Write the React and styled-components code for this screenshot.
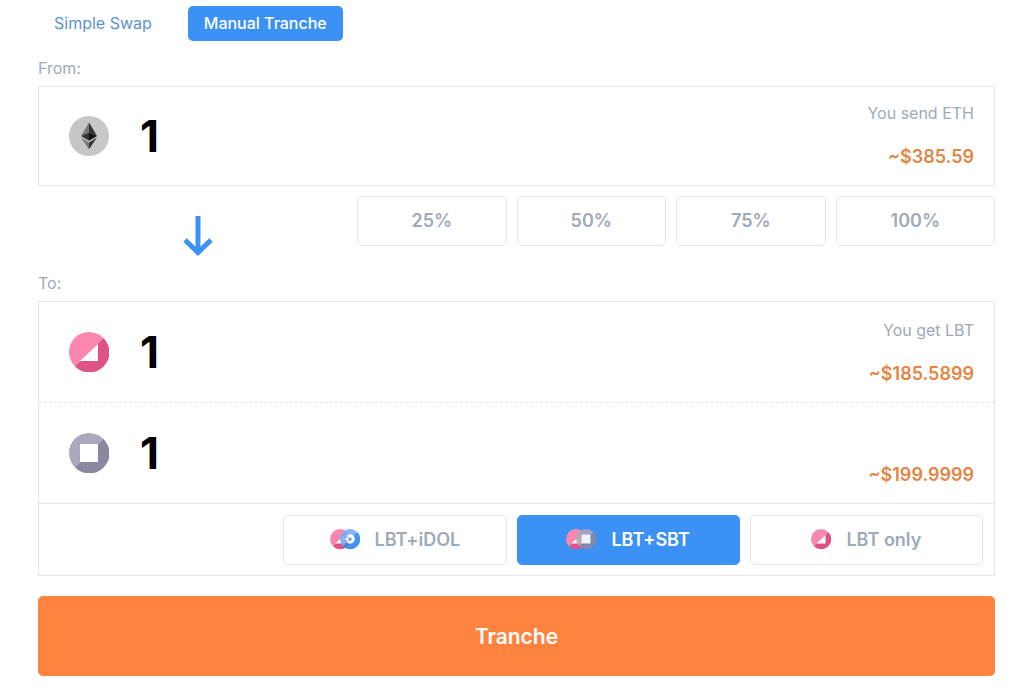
import { useState } from "react";
import styled, { createGlobalStyle } from "styled-components";

const percents = ["25%", "50%", "75%", "100%"];

const pairs = [
  { id: "idol", label: "LBT+iDOL", icons: ["lbt", "idol"] },
  { id: "sbt", label: "LBT+SBT", icons: ["lbt", "sbt"] },
  { id: "lbt", label: "LBT only", icons: ["lbt"] },
];

function EthIcon() {
  return (
    <TokenSvg viewBox="0 0 40 40" aria-hidden="true">
      <circle cx="20" cy="20" r="20" fill="#c6c6c6" />
      <path d="M20 6.5 12 20l8-3.6z" fill="#777" />
      <path d="M20 6.5 28 20l-8-3.6z" fill="#333" />
      <path d="M12 20l8-3.6v8.4z" fill="#333" />
      <path d="M28 20l-8-3.6v8.4z" fill="#111" />
      <path d="M12 21.6l8 4.8v6.8z" fill="#777" />
      <path d="M28 21.6l-8 4.8v6.8z" fill="#333" />
    </TokenSvg>
  );
}

function TokenIcon({ type, small }) {
  return (
    <TokenSvg viewBox="0 0 40 40" $small={small} $type={type} aria-hidden="true">
      {type === "lbt" && (
        <>
          <circle cx="20" cy="20" r="20" fill="#fb87ae" />
          <path d="M34.6 6.3A20 20 0 0 1 6.3 34.6z" fill="#df5286" />
          <path d="M29 12v17H11z" fill="#fff" />
        </>
      )}
      {type === "sbt" && (
        <>
          <circle cx="20" cy="20" r="20" fill="#a9a8bf" />
          <path d="M34.6 6.3A20 20 0 0 1 6.3 34.6z" fill="#8988a0" />
          <path d="M11 11h18v18H11z" fill="#fff" />
        </>
      )}
      {type === "idol" && (
        <>
          <circle cx="20" cy="20" r="20" fill="#77aef5" />
          <path d="M34.6 6.3A20 20 0 0 1 6.3 34.6z" fill="#3289ed" />
          <circle cx="20" cy="20" r="6.5" fill="none" stroke="#fff" strokeWidth="6" />
          <path d="M9 16h6M9 24h6" stroke="#77aef5" strokeWidth="3" />
        </>
      )}
    </TokenSvg>
  );
}

function App() {
  const [tab, setTab] = useState("manual");
  const [pair, setPair] = useState("sbt");
  const [amount, setAmount] = useState("1");

  return (
    <Page>
      <GlobalStyle />
      <Tabs>
        <Tab $active={tab === "simple"} onClick={() => setTab("simple")}>
          Simple Swap
        </Tab>
        <Tab $active={tab === "manual"} onClick={() => setTab("manual")}>
          Manual Tranche
        </Tab>
      </Tabs>

      <Label htmlFor="from">From:</Label>
      <Panel>
        <TokenRow>
          <EthIcon />
          <Amount
            id="from"
            value={amount}
            onChange={(e) => setAmount(e.target.value)}
          />
          <Info>
            <Caption>You send ETH</Caption>
            <Price>~$385.59</Price>
          </Info>
        </TokenRow>
      </Panel>

      <PercentRow>
        <ArrowCell>
          <ArrowSvg viewBox="0 0 30 40" aria-hidden="true">
            <path d="M15 0v36M2 24l13 12.5L28 24" />
          </ArrowSvg>
        </ArrowCell>
        {percents.map((percent) => (
          <OptionButton key={percent}>{percent}</OptionButton>
        ))}
      </PercentRow>

      <Label htmlFor="to">To:</Label>
      <Panel>
        <TokenRow $divider="dashed">
          <TokenIcon type="lbt" />
          <Amount id="to" value={amount} readOnly />
          <Info>
            <Caption>You get LBT</Caption>
            <Price>~$185.5899</Price>
          </Info>
        </TokenRow>
        <TokenRow $divider="solid">
          <TokenIcon type="sbt" />
          <Amount aria-label="SBT amount" value={amount} readOnly />
          <Info>
            <Price>~$199.9999</Price>
          </Info>
        </TokenRow>
        <PairRow>
          {pairs.map(({ id, label, icons }) => (
            <OptionButton
              key={id}
              $active={pair === id}
              onClick={() => setPair(id)}
            >
              <IconGroup>
                {icons.map((type) => (
                  <TokenIcon key={type} type={type} small />
                ))}
              </IconGroup>
              {label}
            </OptionButton>
          ))}
        </PairRow>
      </Panel>

      <Submit>Tranche</Submit>
    </Page>
  );
}

const GlobalStyle = createGlobalStyle`
  * {
    box-sizing: border-box;
  }
  body {
    margin: 0;
    background-color: #fff;
  }
  body, button, input {
    font-family: Inter, Roboto, sans-serif;
  }
  button {
    cursor: pointer;
  }
`;

const Page = styled.main`
  display: flex;
  flex-direction: column;
  padding: 6px 34px 19px 38px;
`;

const Tabs = styled.div`
  display: flex;
  column-gap: 20px;
  margin-bottom: 15px;
`;

const Tab = styled.button`
  height: 35px;
  padding: 0 16px 2px;
  border: none;
  border-radius: 5px;
  font-size: 16px;
  font-weight: ${({ $active }) => ($active ? 500 : 400)};
  color: ${({ $active }) => ($active ? "#fff" : "#5b93d3")};
  background-color: ${({ $active }) => ($active ? "#3c91f5" : "transparent")};
`;

const Label = styled.label`
  height: 30px;
  font-size: 16px;
  line-height: 24px;
  color: #9daab8;
`;

const Panel = styled.section`
  border: 1px solid #e4e6e8;
`;

const TokenRow = styled.div`
  display: flex;
  align-items: center;
  min-height: 98px;
  padding: 0 20px 0 30px;
  ${({ $divider }) =>
    $divider && `min-height: 101px; border-bottom: 1px ${$divider} #e4e6e8;`}
`;

const TokenSvg = styled.svg`
  flex: none;
  width: ${({ $small }) => ($small ? "20px" : "40px")};
  height: ${({ $small }) => ($small ? "20px" : "40px")};
  opacity: ${({ $small, $type }) => ($small && $type !== "lbt" ? 0.9 : 1)};
`;

const Amount = styled.input`
  flex: 1;
  min-width: 0;
  margin-left: 31px;
  padding: 0;
  border: none;
  outline: none;
  background: transparent;
  font-size: 44px;
  font-weight: 700;
  color: #000;
`;

const Info = styled.div`
  display: flex;
  flex-direction: column;
  align-self: stretch;
  justify-content: flex-end;
  row-gap: 20px;
  padding-bottom: 16px;
  text-align: right;
`;

const Caption = styled.span`
  font-size: 16px;
  line-height: 24px;
  color: #9daab8;
`;

const Price = styled.span`
  font-size: 18px;
  font-weight: 600;
  line-height: 24px;
  color: #e38544;
`;

const PercentRow = styled.div`
  display: grid;
  grid-template-columns: 2fr repeat(4, 1fr);
  margin: 10px 0 15px;
`;

const ArrowCell = styled.div`
  display: flex;
  justify-content: center;
  padding: 20px 0 0;
`;

const ArrowSvg = styled.svg`
  flex: none;
  width: 30px;
  height: 40px;
  fill: none;
  stroke: #3c91f5;
  stroke-width: 5px;
`;

const OptionButton = styled.button`
  display: flex;
  align-items: center;
  justify-content: center;
  column-gap: 15px;
  height: 50px;
  margin-right: 10px;
  padding: 0 0 2px;
  border: 1px solid ${({ $active }) => ($active ? "#3c91f5" : "#e4e6e8")};
  border-radius: 5px;
  font-size: 18px;
  font-weight: 600;
  color: ${({ $active }) => ($active ? "#fff" : "#9daab8")};
  background-color: ${({ $active }) => ($active ? "#3c91f5" : "#fff")};
  &:last-child {
    margin-right: 0;
  }
`;

const PairRow = styled.div`
  display: grid;
  grid-template-columns: repeat(4, 1fr);
  padding: 11px 11px 10px;
  & > :first-child {
    grid-column-start: 2;
  }
`;

const IconGroup = styled.span`
  display: flex;
  & > svg + svg {
    margin-left: -10px;
  }
`;

const Submit = styled.button`
  height: 80px;
  margin-top: 20px;
  border: none;
  border-radius: 5px;
  font-size: 21px;
  font-weight: 600;
  color: #fff;
  background-color: #ff833e;
`;

export default App;
